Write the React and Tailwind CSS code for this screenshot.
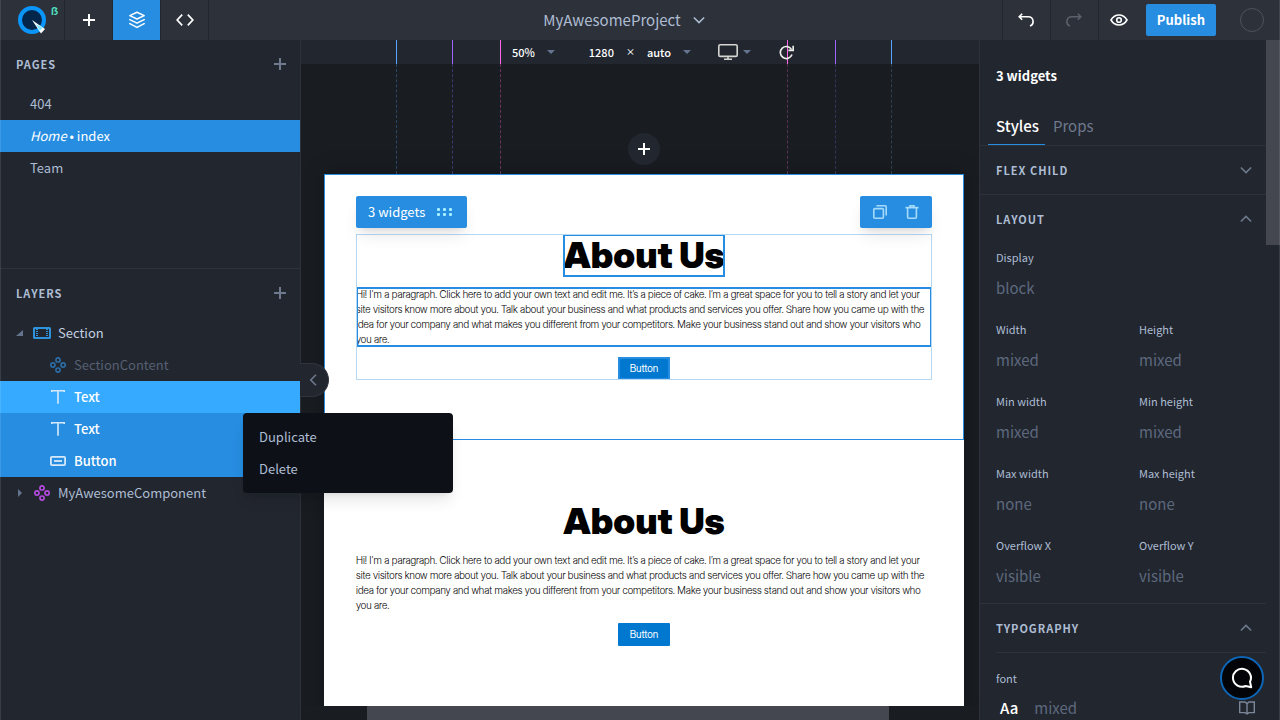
import React from "react";

const cx = (...parts) => parts.filter(Boolean).join(" ");

/* ---------- icons ---------- */

function Logo() {
  return (
    <svg width="28" height="28" viewBox="0 0 28 28" aria-hidden="true">
      <circle cx="14" cy="14" r="12" fill="#04264a" stroke="#0a95fa" strokeWidth="4" />
      <path d="M14 14 L27 23 L23 27.5 Z" fill="#fff" />
      <path d="M18 18.2 L24.6 21.4 L21.8 24.8 Z" fill="#7feaff" />
    </svg>
  );
}

function Plus({ size = 12, className }) {
  return (
    <svg width={size} height={size} viewBox="0 0 12 12" fill="none" stroke="currentColor" strokeWidth="2" className={className} aria-hidden="true">
      <path d="M6 0V12M0 6H12" />
    </svg>
  );
}

function LayersIcon() {
  return (
    <svg width="18" height="18" viewBox="0 0 18 18" fill="none" stroke="currentColor" strokeWidth="1.5" strokeLinejoin="round" strokeLinecap="round" aria-hidden="true">
      <path d="M9 1.2 L16.2 4.6 L9 8 L1.8 4.6 Z" />
      <path d="M1.8 8.6 L9 12.2 L16.2 8.6" />
      <path d="M1.8 12.6 L9 16.4 L16.2 12.6" />
    </svg>
  );
}

function CodeIcon() {
  return (
    <svg width="18" height="12" viewBox="0 0 18 12" fill="none" stroke="currentColor" strokeWidth="1.7" aria-hidden="true">
      <path d="M6.2 0.6 L1.2 6 L6.2 11.4M11.8 0.6 L16.8 6 L11.8 11.4" />
    </svg>
  );
}

function Chevron({ dir = "down", className }) {
  const paths = { down: "M1 1 L7 7 L13 1", up: "M1 7 L7 1 L13 7" };
  return (
    <svg width="12" height="8" viewBox="0 0 14 8" fill="none" stroke="currentColor" strokeWidth="1.8" className={className} aria-hidden="true">
      <path d={paths[dir]} />
    </svg>
  );
}

function Caret() {
  return (
    <svg width="8" height="4" viewBox="0 0 8 4" fill="#64748f" aria-hidden="true">
      <path d="M0 0H8L4 4Z" />
    </svg>
  );
}

function UndoIcon({ className }) {
  return (
    <svg width="16" height="15" viewBox="0 0 16 15" fill="none" stroke="currentColor" strokeWidth="1.6" className={className} aria-hidden="true">
      <path d="M4.2 0.8 L1.2 3.8 L4.2 6.8M1.2 3.8H10.4A4.7 4.7 0 0 1 12 12.9" />
    </svg>
  );
}

function EyeIcon() {
  return (
    <svg width="18" height="12" viewBox="0 0 18 12" fill="none" stroke="currentColor" strokeWidth="1.6" aria-hidden="true">
      <path d="M1 6C3 2.6 5.8 1 9 1S15 2.6 17 6C15 9.4 12.2 11 9 11S3 9.4 1 6Z" />
      <circle cx="9" cy="6" r="2.3" />
    </svg>
  );
}

function MonitorIcon() {
  return (
    <svg width="20" height="16" viewBox="0 0 20 16" fill="none" stroke="#d5d5d2" strokeWidth="1.6" aria-hidden="true">
      <rect x="0.8" y="0.8" width="18.4" height="11.6" rx="1.4" />
      <path d="M10 12.4V15M6 15.2H14" />
    </svg>
  );
}

function RefreshIcon() {
  return (
    <svg width="15" height="15" viewBox="0 0 15 15" fill="none" stroke="#ecece8" strokeWidth="1.7" aria-hidden="true">
      <path d="M12.6 4.6A6 6 0 1 0 13 9.5" />
      <path d="M14.2 0.8V5.4H9.4" />
    </svg>
  );
}

function SectionIcon() {
  return (
    <svg width="18" height="12" viewBox="0 0 18 12" fill="none" stroke="#2f93db" aria-hidden="true">
      <rect x="1" y="1" width="16" height="10" rx="0.6" strokeWidth="2" />
      <path d="M4 2V10M14 2V10" strokeWidth="2" strokeDasharray="1 1" />
    </svg>
  );
}

function DiamondIcon({ className }) {
  return (
    <svg width="16" height="16" viewBox="0 0 16 16" fill="none" stroke="currentColor" strokeWidth="1.7" className={className} aria-hidden="true">
      <circle cx="8" cy="2.9" r="2.1" />
      <circle cx="8" cy="13.1" r="2.1" />
      <circle cx="2.9" cy="8" r="2.1" />
      <circle cx="13.1" cy="8" r="2.1" />
    </svg>
  );
}

function TextIcon() {
  return (
    <svg width="14" height="14" viewBox="0 0 14 14" fill="none" stroke="#d6e9fa" strokeWidth="1.6" aria-hidden="true">
      <path d="M0.8 2V0.8H13.2V2M7 0.8V13.8" />
    </svg>
  );
}

function ButtonIcon() {
  return (
    <svg width="16" height="10" viewBox="0 0 16 10" fill="none" stroke="#d6e9fa" strokeWidth="1.8" aria-hidden="true">
      <rect x="0.9" y="0.9" width="14.2" height="8.2" rx="1" />
      <path d="M4 5H12" />
    </svg>
  );
}

/* ---------- header ---------- */

function HeaderButton({ label, active, className, children }) {
  return (
    <button
      type="button"
      aria-label={label}
      className={cx("flex h-10 w-12 items-center justify-center border-[#22262f] text-white", active && "bg-[#268de0]", className)}
    >
      {children}
    </button>
  );
}

function Header() {
  return (
    <header className="flex h-10 shrink-0 items-center justify-between bg-[#2d313a]">
      <div className="flex flex-1">
        <a href="#home" aria-label="Home" className="flex h-10 w-[65px] items-center gap-[5px] border-r border-[#22262f] pl-[18px]">
          <Logo />
          <span className="h-[30px] text-[10px] leading-3 font-bold text-[#50e3c2]">ẞ</span>
        </a>
        <HeaderButton label="Add" className="border-r"><Plus /></HeaderButton>
        <HeaderButton label="Layers" active className="border-r"><LayersIcon /></HeaderButton>
        <HeaderButton label="Code" className="border-r"><CodeIcon /></HeaderButton>
      </div>
      <button type="button" className="mr-8 flex items-center gap-3 text-[15px] leading-5 text-[#adbdd3]">
        MyAwesomeProject
        <Chevron />
      </button>
      <div className="flex flex-1 items-center justify-end">
        <HeaderButton label="Undo" className="border-l"><UndoIcon /></HeaderButton>
        <HeaderButton label="Redo" className="border-l"><UndoIcon className="-scale-x-100 text-[#5b606a]" /></HeaderButton>
        <HeaderButton label="Preview" className="border-l pr-[6px]"><EyeIcon /></HeaderButton>
        <button type="button" className="h-8 rounded-xs bg-[#268de0] px-[11px] text-[13px] leading-5 font-bold text-white">Publish</button>
        <button type="button" aria-label="Account" className="mr-4 ml-6 size-6 rounded-full border border-[#4f535c]" />
      </div>
    </header>
  );
}

/* ---------- left sidebar ---------- */

function PanelTitle({ children, label }) {
  return (
    <div className="flex h-12 items-center justify-between pr-[14px] pl-4">
      <h2 className="text-[11px] leading-4 font-bold tracking-[1px] text-[#adbdd3]">{children}</h2>
      <button type="button" aria-label={label} className="text-[#6e7a8d]"><Plus /></button>
    </div>
  );
}

const layers = [
  { name: "Section", icon: <SectionIcon />, toggle: "open", indent: "pl-4", tone: "text-[#c3d0e2]" },
  { name: "SectionContent", icon: <DiamondIcon className="text-[#2b6ca5]" />, indent: "pl-8", tone: "text-[#566072]" },
  { name: "Text", icon: <TextIcon />, indent: "pl-8", tone: "bg-[#36aaff] font-medium text-white" },
  { name: "Text", icon: <TextIcon />, indent: "pl-8", tone: "bg-[#268de0] font-medium text-white" },
  { name: "Button", icon: <ButtonIcon />, indent: "pl-8", tone: "bg-[#268de0] font-medium text-white" },
  { name: "MyAwesomeComponent", icon: <DiamondIcon className="text-[#b44be0]" />, toggle: "closed", indent: "pl-4", tone: "text-[#adbdd3]" },
];

function LayerRow({ name, icon, toggle, indent, tone }) {
  return (
    <li>
      <button type="button" className={cx("flex h-8 w-full items-center text-left text-[13px] leading-5", indent, tone)}>
        <span className="flex w-4 shrink-0">
          {toggle === "open" && (
            <svg width="7" height="6" viewBox="0 0 7 6" fill="#64748f" aria-hidden="true"><path d="M7 0V6H0Z" /></svg>
          )}
          {toggle === "closed" && (
            <svg width="8" height="8" viewBox="0 0 8 8" fill="#64748f" aria-hidden="true"><path d="M2 0L6 4L2 8Z" /></svg>
          )}
        </span>
        <span className="mr-[6px] flex w-5 shrink-0 justify-center">{icon}</span>
        {name}
      </button>
    </li>
  );
}

function ContextMenu() {
  return (
    <ul className="absolute top-[373px] left-[243px] z-20 w-[210px] rounded-sm bg-[#0d1017] py-2 shadow-lg">
      {["Duplicate", "Delete"].map((item) => (
        <li key={item}>
          <button type="button" className="h-8 w-full px-4 text-left text-[13px] leading-5 text-[#adbdd3]">{item}</button>
        </li>
      ))}
    </ul>
  );
}

function LeftSidebar() {
  return (
    <aside className="relative z-10 flex w-[301px] shrink-0 flex-col border-r border-[#2d313a] bg-[#22262f]">
      <section className="h-[229px] border-b border-[#2d313a]">
        <PanelTitle label="Add page">PAGES</PanelTitle>
        <nav className="flex flex-col text-[13px] leading-8 text-[#adbdd3]">
          <a href="#404" className="h-8 pl-[30px]">404</a>
          <a href="#index" className="h-8 bg-[#268de0] pl-[30px] text-white"><i>Home</i> • index</a>
          <a href="#team" className="h-8 pl-[30px]">Team</a>
        </nav>
      </section>
      <section>
        <PanelTitle label="Add layer">LAYERS</PanelTitle>
        <ul>
          {layers.map((layer, i) => <LayerRow key={i} {...layer} />)}
        </ul>
      </section>
      <button
        type="button"
        aria-label="Collapse sidebar"
        className="absolute top-[323px] left-full flex h-[34px] w-[29px] items-center rounded-r-full border border-l-0 border-[#30343d] bg-[#22262f] pl-[9px] text-[#6e7a8d]"
      >
        <svg width="8" height="12" viewBox="0 0 8 12" fill="none" stroke="currentColor" strokeWidth="1.6" aria-hidden="true"><path d="M7 0.8L1.8 6L7 11.2" /></svg>
      </button>
      <ContextMenu />
    </aside>
  );
}

/* ---------- canvas ---------- */

const guides = [
  { place: "left-[calc(50%-248px)]", solid: "border-[#5aa5ff]", dashed: "border-[#2b4766]" },
  { place: "left-[calc(50%-192px)]", solid: "border-[#9c64ff]", dashed: "border-[#42366c]" },
  { place: "left-[calc(50%-144px)]", solid: "border-[#ff64e8]", dashed: "border-[#693463]" },
  { place: "left-[calc(50%+143px)]", solid: "border-[#ff64e8]", dashed: "border-[#593158]" },
  { place: "left-[calc(50%+191px)]", solid: "border-[#9c64ff]", dashed: "border-[#39315a]" },
  { place: "left-[calc(50%+247px)]", solid: "border-[#5aa5ff]", dashed: "border-[#304052]" },
];

function CanvasToolbar() {
  return (
    <div className="bg-[#22262f] pr-[15px] pl-[23px]">
      <div className="relative h-6">
        {guides.map((g) => (
          <span key={g.place} className={cx("absolute inset-y-0 border-l", g.place, g.solid)} />
        ))}
        <div className="relative flex h-6 items-center justify-center pl-[18px] text-[11px] leading-4 font-medium text-white">
          <button type="button" className="flex items-center gap-3">50% <Caret /></button>
          <span className="ml-[34px]">1280</span>
          <span className="mx-3 text-[9px]">×</span>
          <button type="button" className="flex items-center gap-3">auto <Caret /></button>
          <button type="button" aria-label="Device" className="ml-[27px] flex items-center gap-[5px]"><MonitorIcon /> <Caret /></button>
          <button type="button" aria-label="Refresh" className="ml-7"><RefreshIcon /></button>
        </div>
      </div>
    </div>
  );
}

function AboutSection({ selected }) {
  return (
    <section className={cx("relative px-8 py-[60px]", selected && "outline-1 -outline-offset-1 outline-[#268de0]")}>
      {selected && (
        <div className="absolute inset-x-8 top-[22px] flex justify-between">
          <button type="button" className="flex h-8 items-center gap-3 rounded-xs bg-[#268de0] pr-[15px] pl-3 text-[13px] leading-5 text-white shadow-lg">
            3 widgets
            <svg width="15" height="8" viewBox="0 0 15 8" fill="#a8f0ff" aria-hidden="true">
              {[0, 6, 12].map((x) => (
                <g key={x}>
                  <rect x={x} y="0" width="3" height="3" rx="1" />
                  <rect x={x} y="5" width="3" height="3" rx="1" />
                </g>
              ))}
            </svg>
          </button>
          <div className="flex h-8 items-center gap-[18px] rounded-xs bg-[#268de0] px-[13px] text-[#a5dbfa] shadow-lg">
            <button type="button" aria-label="Duplicate widgets">
              <svg width="14" height="14" viewBox="0 0 14 14" fill="none" stroke="currentColor" strokeWidth="1.6" aria-hidden="true">
                <rect x="0.8" y="3.6" width="9.6" height="9.6" rx="1" />
                <path d="M3.4 0.8H12.2Q13.2 0.8 13.2 1.8V10.4" />
              </svg>
            </button>
            <button type="button" aria-label="Delete widgets">
              <svg width="14" height="14" viewBox="0 0 14 14" fill="none" stroke="currentColor" strokeWidth="1.6" aria-hidden="true">
                <path d="M0.5 2.6H13.5M5 2.4V0.8H9V2.4M2.6 2.6V12.2Q2.6 13.2 3.6 13.2H10.4Q11.4 13.2 11.4 12.2V2.6" />
              </svg>
            </button>
          </div>
        </div>
      )}
      <div className={cx("flex flex-col items-center gap-[10px] font-['Inter_Display',Inter,sans-serif] text-black", selected && "outline-1 -outline-offset-1 outline-[#b5d8f5]")}>
        <h1 className={cx("text-[36px] leading-[43px] font-black", selected && "outline-2 -outline-offset-2 outline-[#268de0]")}>About Us</h1>
        <p className={cx("w-full text-[10px] leading-[15px] font-light whitespace-nowrap", selected && "outline-2 -outline-offset-2 outline-[#268de0]")}>
          Hi! I'm a paragraph. Click here to add your own text and edit me. It’s a piece of cake. I’m a great space for you to tell a story and let your<br />
          site visitors know more about you. Talk about your business and what products and services you offer. Share how you came up with the<br />
          idea for your company and what makes you different from your competitors. Make your business stand out and show your visitors who<br />
          you are.
        </p>
        <button
          type="button"
          className={cx("h-[23px] w-[52px] bg-[#0078cf] text-[10px] leading-[15px] text-white", selected ? "outline-2 -outline-offset-2 outline-[#268de0]" : "rounded-[1px]")}
        >
          Button
        </button>
      </div>
    </section>
  );
}

function Canvas() {
  return (
    <main className="flex min-w-0 flex-1 flex-col bg-[#191d21]">
      <CanvasToolbar />
      <div className="flex flex-1 flex-col overflow-hidden pr-[15px] pl-[23px]">
        <div className="relative z-10 flex h-[110px] items-end justify-center pb-[9px]">
          {guides.map((g) => (
            <span key={g.place} className={cx("absolute inset-y-0 border-l border-dashed", g.place, g.dashed)} />
          ))}
          <button type="button" aria-label="Add section" className="relative flex size-8 items-center justify-center rounded-full bg-[#22262f] text-white">
            <Plus />
          </button>
        </div>
        <div className="flex-1 bg-white shadow-[0_0_16px_#12141b]">
          <AboutSection selected />
          <AboutSection />
        </div>
      </div>
      <div className="flex h-[14px] bg-[#191d21] pr-[90px] pl-[66px]">
        <div className="flex-1 bg-[#444750]" />
      </div>
    </main>
  );
}

/* ---------- right inspector ---------- */

function Field({ id, label, value, wide }) {
  return (
    <div className={cx("flex h-[66px] min-w-0 flex-col", wide && "col-span-2")}>
      <label htmlFor={id} className="text-[11px] leading-4 text-[#adbdd3]">{label}</label>
      <input
        id={id}
        placeholder={value}
        className="mt-[7px] h-[30px] w-full bg-transparent text-[15px] leading-5 text-white outline-none placeholder:text-[#5d697e]"
      />
    </div>
  );
}

function GroupTitle({ children, open, className }) {
  return (
    <button type="button" aria-expanded={!!open} className={cx("flex w-full items-center justify-between border-[#2d313a] pr-[14px] text-[11px] leading-4 font-bold tracking-[1px] text-[#adbdd3]", className)}>
      {children}
      <Chevron dir={open ? "up" : "down"} className="text-[#6e7a8d]" />
    </button>
  );
}

const fields = [
  ["display", "Display", "block", true],
  ["width", "Width", "mixed"],
  ["height", "Height", "mixed"],
  ["min-width", "Min width", "mixed"],
  ["min-height", "Min height", "mixed"],
  ["max-width", "Max width", "none"],
  ["max-height", "Max height", "none"],
  ["overflow-x", "Overflow X", "visible"],
  ["overflow-y", "Overflow Y", "visible"],
];

function Inspector() {
  return (
    <aside className="flex w-[301px] shrink-0 overflow-hidden border-l border-[#2d313a] bg-[#22262f]">
      <div className="min-w-0 flex-1">
        <h2 className="pt-[26px] pl-4 text-[13px] leading-5 font-bold text-white">3 widgets</h2>
        <div className="mt-5 flex h-10 border-b border-[#2d313a] pl-2 text-[15px] leading-10">
          <button type="button" className="border-b border-[#268de0] px-2 pr-[6px] font-medium text-white">Styles</button>
          <button type="button" className="px-2 text-[#6e7a8d]">Props</button>
        </div>
        <GroupTitle className="h-[49px] border-b pl-4">FLEX CHILD</GroupTitle>
        <GroupTitle open className="h-12 pl-4">LAYOUT</GroupTitle>
        <div className="grid grid-cols-2 gap-x-4 gap-y-[6px] border-b border-[#2d313a] pt-[6px] pl-4">
          {fields.map(([id, label, value, wide]) => <Field key={id} id={id} label={label} value={value} wide={wide} />)}
        </div>
        <div className="pl-4">
          <GroupTitle open className="h-[49px] border-b">TYPOGRAPHY</GroupTitle>
          <label htmlFor="font" className="mt-[17px] block text-[11px] leading-4 text-[#adbdd3]">font</label>
          <div className="mt-[7px] flex h-[30px] items-center gap-4 pr-[11px] pl-1 text-[15px] leading-5">
            <span className="font-medium text-white">Aa</span>
            <input id="font" placeholder="mixed" className="min-w-0 flex-1 bg-transparent text-white outline-none placeholder:text-[#5d697e]" />
            <svg width="16" height="14" viewBox="0 0 16 14" fill="none" stroke="#7b8699" strokeWidth="1.4" aria-hidden="true">
              <path d="M8 2.6L6 1H0.7V11.6H6L8 13L10 11.6H15.3V1H10L8 2.6V13" />
            </svg>
          </div>
        </div>
      </div>
      <div className="w-[14px] shrink-0">
        <div className="h-[205px] bg-[#444750]" />
      </div>
    </aside>
  );
}

export default function App() {
  return (
    <div className="relative flex h-screen flex-col overflow-hidden bg-[#191d21] font-['Noto_Sans_CJK_JP',sans-serif]">
      <Header />
      <div className="flex min-h-0 flex-1">
        <LeftSidebar />
        <Canvas />
        <Inspector />
      </div>
      <button
        type="button"
        aria-label="Open chat"
        className="absolute right-4 bottom-5 flex size-11 items-center justify-center rounded-full border-2 border-[#0d66b8] bg-[#020407] text-white"
      >
        <svg width="22" height="22" viewBox="0 0 22 22" fill="none" stroke="currentColor" strokeWidth="2" strokeLinejoin="round" aria-hidden="true">
          <path d="M19 14.8A9 9 0 1 0 14.6 19L20.2 20.2Z" />
        </svg>
      </button>
      <div className="pointer-events-none absolute inset-0 z-30 border-x border-white/10" />
    </div>
  );
}
